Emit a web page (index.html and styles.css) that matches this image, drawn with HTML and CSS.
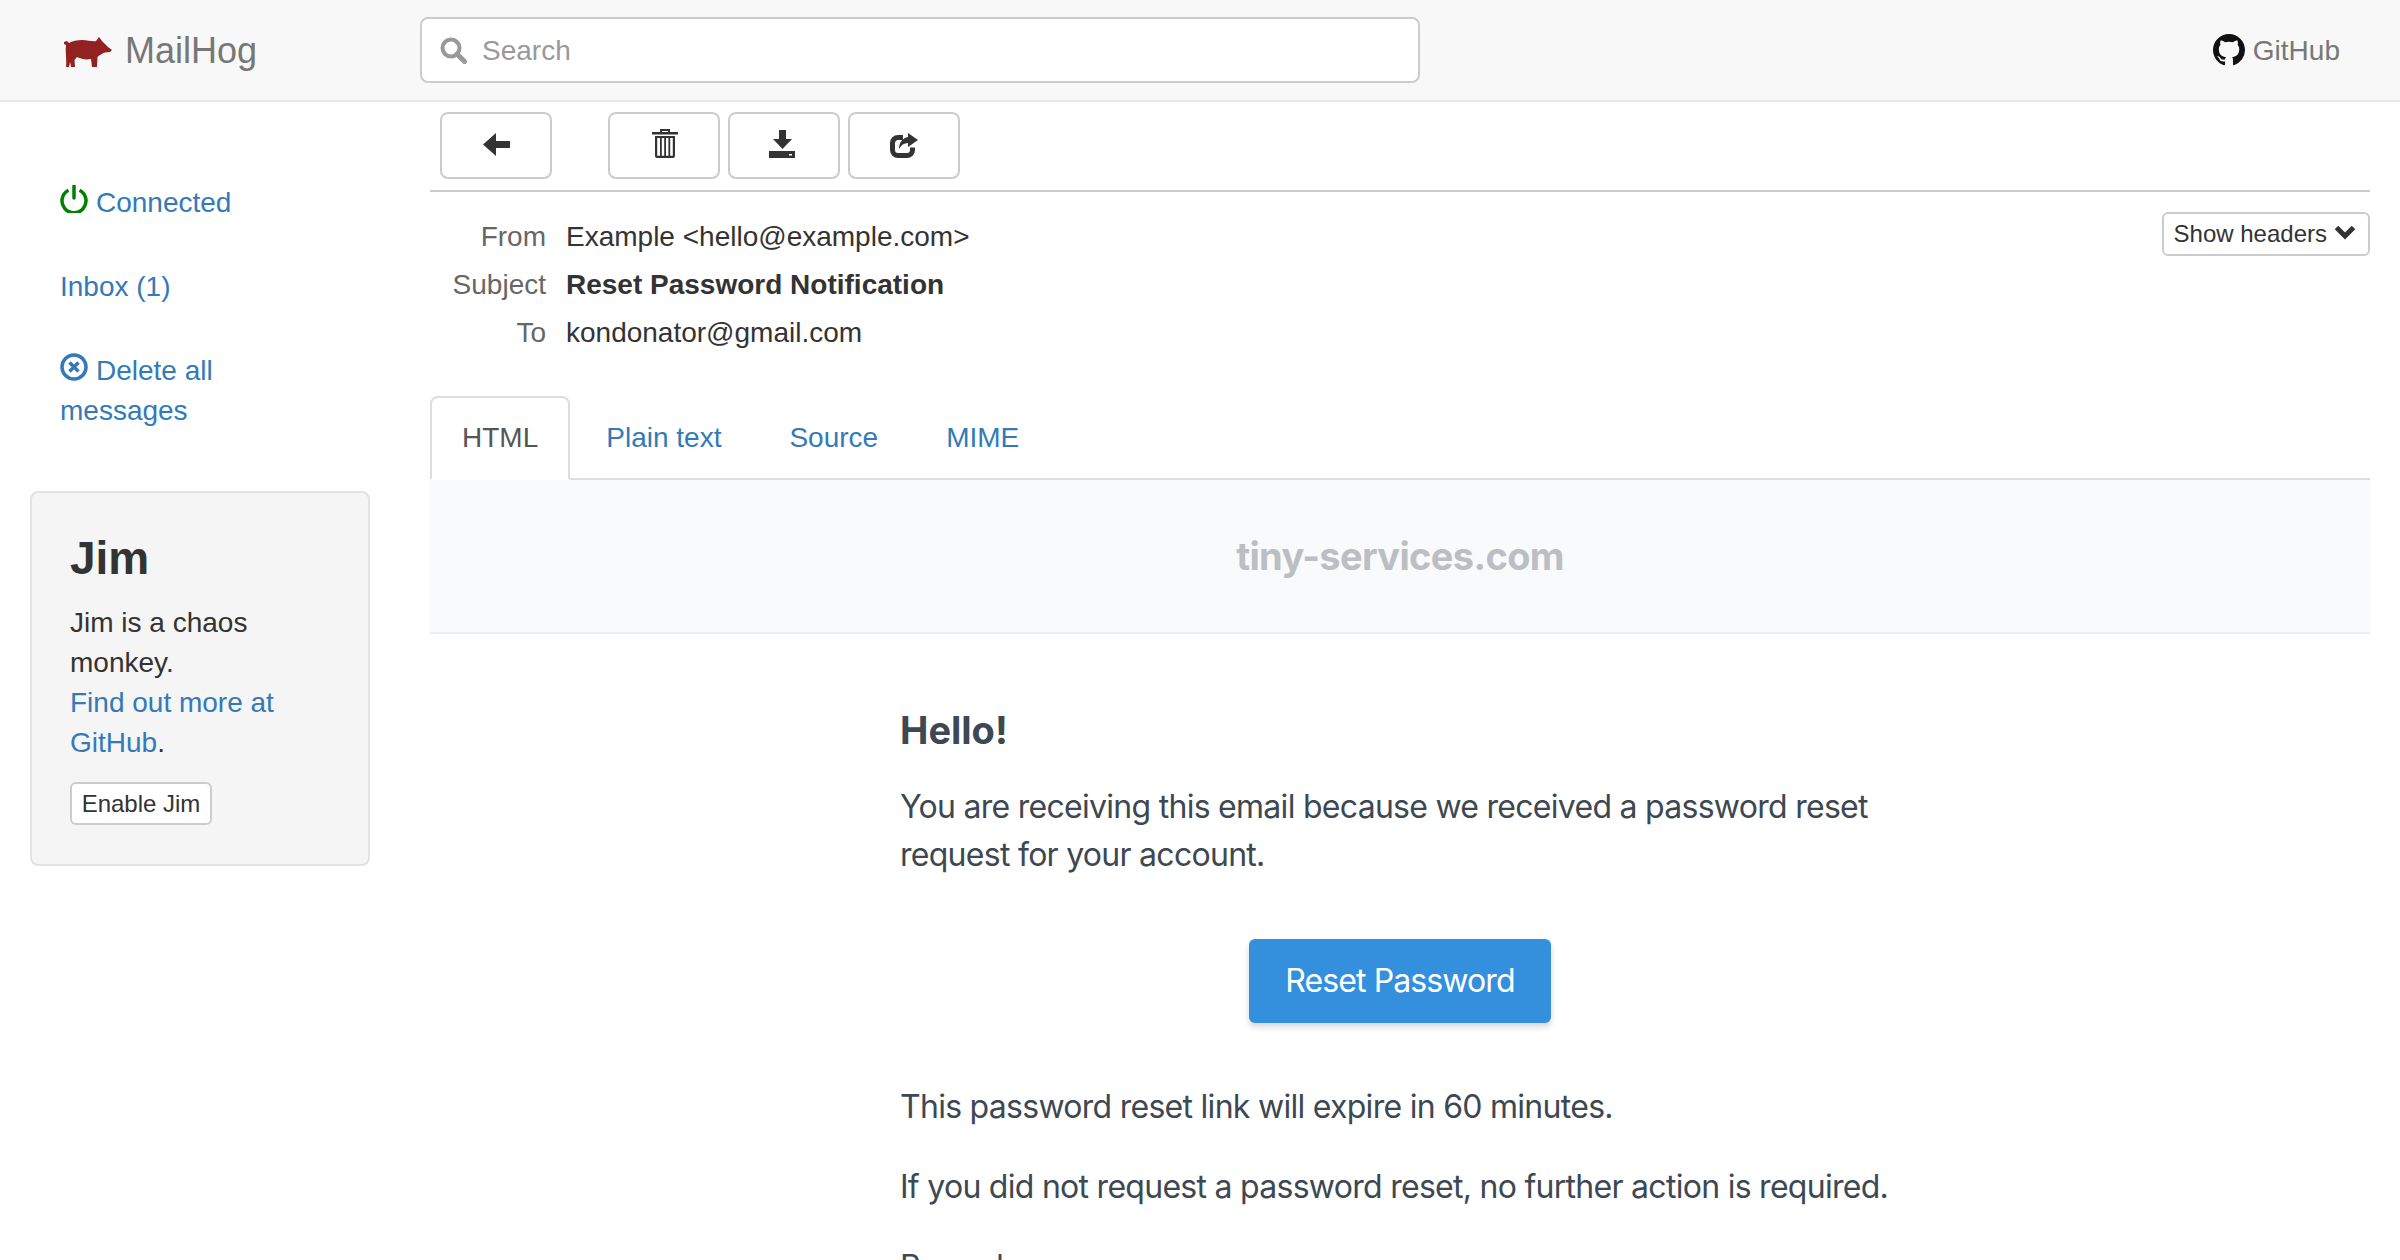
FILE: index.html
```html
<!DOCTYPE html>
<html>
<head>
	<title>MailHog</title>
	<meta charset="utf-8">
	<link rel="stylesheet" href="styles.css">
</head>
<body>
<nav class="navbar">
	<a class="brand" href="#">
		<svg class="pig" viewBox="0 0 48 30"><path d="M0 5L3 4L5 6C8 4 13 3 18 3C24 3 29 5 32 4L35 0L38 4L41 7L44 10L48 13L46 15L41 15.5C38 16.5 36 18 33.5 20L33 30L28 30L27 22C22 23 17 22 13 20L10.5 23L11 30L7 30L6 25L5 30L2 30C3 24 1 14 2 8L0 7Z"/></svg>
		<span>MailHog</span>
	</a>
	<div class="search">
		<svg class="search-icon" viewBox="0 0 27 27"><circle cx="11" cy="11" r="8.5"/><path d="M17 17L24.5 24.5"/></svg>
		<span>Search</span>
	</div>
	<a class="github" href="#">
		<svg viewBox="0 0 16 16"><path d="M8 0C3.58 0 0 3.58 0 8c0 3.54 2.29 6.53 5.47 7.59.4.07.55-.17.55-.38 0-.19-.01-.82-.01-1.49-2.01.37-2.53-.49-2.69-.94-.09-.23-.48-.94-.82-1.13-.28-.15-.68-.52-.01-.53.63-.01 1.08.58 1.23.82.72 1.21 1.87.87 2.33.66.07-.52.28-.87.51-1.07-1.78-.2-3.64-.89-3.64-3.95 0-.87.31-1.59.82-2.15-.08-.2-.36-1.02.08-2.12 0 0 .67-.21 2.2.82.64-.18 1.32-.27 2-.27.68 0 1.36.09 2 .27 1.53-1.04 2.2-.82 2.2-.82.44 1.1.16 1.92.08 2.12.51.56.82 1.27.82 2.15 0 3.07-1.87 3.75-3.65 3.95.29.25.54.73.54 1.48 0 1.07-.01 1.93-.01 2.2 0 .21.15.46.55.38A8.013 8.013 0 0016 8c0-4.42-3.58-8-8-8z"/></svg>
		<span>GitHub</span>
	</a>
</nav>

<div class="page">
	<aside class="sidebar">
		<ul class="side-nav">
			<li>
				<a href="#">
					<svg class="side-icon power" viewBox="0 0 28 28"><path d="M8.5 5.2A12 12 0 1 0 19.5 5.2"/><path d="M14 1V13"/></svg>Connected
				</a>
			</li>
			<li><a href="#">Inbox (1)</a></li>
			<li>
				<a href="#">
					<svg class="side-icon remove" viewBox="0 0 28 28"><circle cx="14" cy="14" r="12"/><path d="M9.5 9.5L18.5 18.5M18.5 9.5L9.5 18.5"/></svg>Delete all messages
				</a>
			</li>
		</ul>
		<div class="jim">
			<h3>Jim</h3>
			<p>Jim is a chaos monkey.<br><a href="#">Find out more at GitHub</a>.</p>
			<button class="btn btn-jim">Enable Jim</button>
		</div>
	</aside>

	<main class="main">
		<div class="toolbar">
			<button class="btn btn-tool btn-back">
				<svg class="arrow" viewBox="0 0 27 23"><path d="M0 11.5L13 0V8H27V15H13V23Z"/></svg>
			</button>
			<button class="btn btn-tool">
				<svg class="trash" viewBox="0 0 26 30"><path d="M8 5V1H18V5H16V3H10V5Z"/><rect y="4" width="26" height="2.5"/><path d="M3 8H23V28A2 2 0 0 1 21 30H5A2 2 0 0 1 3 28ZM5.2 10V27.8H8V10ZM9.8 10V27.8H12.2V10ZM14 10V27.8H16.4V10ZM18.2 10V27.8H20.8V10Z" fill-rule="evenodd"/></svg>
			</button>
			<button class="btn btn-tool">
				<svg class="download" viewBox="0 0 26 28"><path d="M10 0H17V9H23L13.5 19L4 9H10Z"/><path fill-rule="evenodd" d="M0 21H26V28H0ZM20 24V25.5H23V24Z"/></svg>
			</button>
			<button class="btn btn-tool">
				<svg class="share" viewBox="0 0 28 25"><path class="box" d="M13 4.5H8A5.5 5.5 0 0 0 2.5 10V17A5.5 5.5 0 0 0 8 22.5H17A5.5 5.5 0 0 0 22.5 17V14.5"/><path d="M18 0L28 7L18 14V10C14 10 11 12 9 16C9 10 12 5 18 4Z"/></svg>
			</button>
		</div>

		<div class="headers">
			<table>
				<tr><th>From</th><td>Example &lt;hello@example.com&gt;</td></tr>
				<tr><th>Subject</th><td><strong>Reset Password Notification</strong></td></tr>
				<tr><th>To</th><td>kondonator@gmail.com</td></tr>
			</table>
			<button class="btn btn-headers">Show headers<svg class="chevron" viewBox="0 0 22 16"><path d="M2.5 3.5L11 12L19.5 3.5"/></svg></button>
		</div>

		<ul class="tabs">
			<li class="active"><a href="#">HTML</a></li>
			<li><a href="#">Plain text</a></li>
			<li><a href="#">Source</a></li>
			<li><a href="#">MIME</a></li>
		</ul>

		<div class="mail">
			<div class="mail-header">tiny-services.com</div>
			<div class="mail-body">
				<h1>Hello!</h1>
				<p>You are receiving this email because we received a password reset request for your account.</p>
				<div class="action"><a class="reset" href="#">Reset Password</a></div>
				<p>This password reset link will expire in 60 minutes.</p>
				<p>If you did not request a password reset, no further action is required.</p>
				<p>Regards,<br>Laravel</p>
			</div>
		</div>
	</main>
</div>
</body>
</html>
```

FILE: styles.css
```css
html, body {
	height: 1260px;
	overflow: hidden;
}
body {
	margin: 0;
	font: 28px/40px "Liberation Sans", Arial, sans-serif;
	color: #333;
	background: #fff;
}
a {
	color: #337ab7;
	text-decoration: none;
}
svg {
	display: block;
}

/* navbar */
.navbar {
	display: flex;
	align-items: center;
	height: 100px;
	background: #f8f8f8;
	border-bottom: 2px solid #e7e7e7;
}
.brand {
	display: flex;
	align-items: center;
	gap: 13px;
	width: 420px;
	box-sizing: border-box;
	padding-left: 64px;
	font-size: 36px;
	color: #777;
}
.brand span {
	padding-top: 2px;
}
.pig {
	width: 48px;
	height: 30px;
	fill: #922222;
	margin-top: 4px;
}
.search {
	display: flex;
	align-items: center;
	gap: 15px;
	width: 1000px;
	height: 66px;
	box-sizing: border-box;
	padding-left: 18px;
	background: #fff;
	border: 2px solid #ccc;
	border-radius: 8px;
	color: #999;
}
.search span {
	padding-top: 2px;
}
.search-icon {
	width: 27px;
	height: 27px;
	fill: none;
	stroke: #999;
	stroke-width: 4;
}
.search-icon path {
	stroke-width: 5;
	stroke-linecap: round;
}
.github {
	display: flex;
	align-items: center;
	gap: 8px;
	margin-left: auto;
	padding-right: 60px;
	color: #777;
}
.github span {
	padding-top: 2px;
}
.github svg {
	width: 32px;
	height: 32px;
	fill: #111;
}

.page {
	display: flex;
}

/* sidebar */
.sidebar {
	width: 430px;
	flex: none;
	box-sizing: border-box;
	padding: 59px 60px 0 30px;
}
.side-nav {
	list-style: none;
	margin: 0;
	padding: 0 60px 0 30px;
}
.side-nav li {
	padding: 22px 0;
}
.side-icon {
	display: inline-block;
	width: 28px;
	height: 28px;
	margin-right: 8px;
	vertical-align: -1px;
	fill: none;
	stroke-width: 3.5;
}
.power {
	stroke: #008000;
}
.power path:last-child {
	stroke-linecap: round;
}
.remove {
	stroke: #337ab7;
}
.jim {
	margin-top: 38px;
	padding: 38px;
	height: 375px;
	box-sizing: border-box;
	background: #f5f5f5;
	border: 2px solid #e3e3e3;
	border-radius: 8px;
}
.jim h3 {
	margin: 0 0 18px;
	font-size: 46px;
	line-height: 54px;
	font-weight: bold;
}
.jim p {
	margin: 0 0 19px;
}

/* buttons */
.btn {
	font: inherit;
	color: #333;
	background: #fff;
	border: 2px solid #ccc;
	border-radius: 6px;
	padding: 0;
}
.btn-jim {
	display: block;
	width: 142px;
	height: 43px;
	font-size: 24px;
	line-height: 36px;
}
.btn-tool {
	display: flex;
	justify-content: center;
	width: 112px;
	height: 67px;
	border-radius: 8px;
}
.btn-back {
	margin-right: 48px;
}
.btn-headers {
	display: flex;
	align-items: center;
	gap: 7px;
	height: 44px;
	padding: 0 12px 0 10px;
	font-size: 24px;
	line-height: 36px;
}
.chevron {
	width: 22px;
	height: 16px;
	margin-top: -4px;
	fill: none;
	stroke: #333;
	stroke-width: 5;
}

/* main column */
.main {
	flex: 1;
	min-width: 0;
	margin-right: 30px;
}
.toolbar {
	display: flex;
	gap: 8px;
	height: 78px;
	padding: 10px 0 0 10px;
	border-bottom: 2px solid #ccc;
}
.arrow {
	width: 27px;
	height: 23px;
	margin-top: 19px;
	fill: #333;
}
.trash {
	width: 26px;
	height: 30px;
	margin: 14px 0 0 2px;
	fill: #333;
}
.download {
	width: 26px;
	height: 28px;
	margin: 16px 4px 0 0;
	fill: #333;
}
.share {
	width: 28px;
	height: 25px;
	margin-top: 19px;
	fill: #333;
}
.share .box {
	fill: none;
	stroke: #333;
	stroke-width: 5;
}

/* message headers */
.headers {
	display: flex;
	justify-content: space-between;
	align-items: flex-start;
	height: 204px;
	padding-top: 20px;
	box-sizing: border-box;
}
.headers table {
	border-collapse: collapse;
	margin-top: 1px;
}
.headers th {
	width: 116px;
	padding: 4px 20px 4px 0;
	font-weight: normal;
	text-align: right;
	color: #666;
}
.headers td {
	padding: 4px 0;
}

/* tabs */
.tabs {
	display: flex;
	gap: 4px;
	list-style: none;
	margin: 0;
	padding: 0;
	height: 82px;
	border-bottom: 2px solid #ddd;
}
.tabs li {
	height: 84px;
	box-sizing: border-box;
}
.tabs a {
	display: block;
	height: 84px;
	box-sizing: border-box;
	padding: 22px 32px 0;
}
.tabs .active a {
	padding: 20px 30px 0;
	color: #555;
	background: #fff;
	border: 2px solid #ddd;
	border-bottom-color: #fff;
	border-radius: 8px 8px 0 0;
}

/* the mail itself */
.mail {
	font-family: Inter, "Liberation Sans", sans-serif;
	font-size: 32px;
	line-height: 48px;
	letter-spacing: -.72px;
	color: #3d4852;
}
.mail-header {
	padding: 48px 0;
	font-size: 38px;
	line-height: 56px;
	font-weight: bold;
	letter-spacing: -.65px;
	text-align: center;
	color: #bbbfc3;
	background: #f8fafc;
	border-bottom: 2px solid #edeff2;
}
.mail-body {
	width: 1000px;
	margin: 0 auto;
	padding-top: 68px;
}
.mail-body h1 {
	margin: 0 0 24px;
	font-size: 38px;
	line-height: 57px;
	letter-spacing: 0;
}
.mail-body p {
	margin: 0 0 32px;
}
.action {
	display: flex;
	justify-content: center;
	margin: 60px 0;
}
.reset {
	padding: 18px 36px;
	letter-spacing: -.9px;
	color: #fff;
	background: #3490dc;
	border-radius: 6px;
	box-shadow: 0 4px 6px rgba(0,0,0,.16);
}
```
